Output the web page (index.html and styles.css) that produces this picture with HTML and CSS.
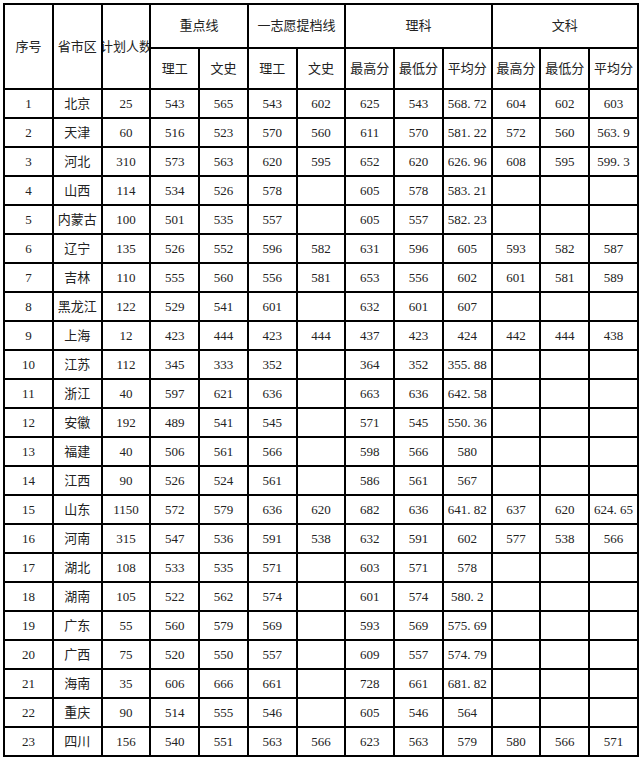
FILE: index.html
```html
<!DOCTYPE html>
<html lang="zh">
<head>
<meta charset="utf-8">
<title>分数线</title>
<link rel="stylesheet" href="styles.css">
</head>
<body>
<table class="grid">
<thead>
<tr class="h1">
<th rowspan="2">序号</th>
<th rowspan="2">省市区</th>
<th rowspan="2"><div class="clip">计划人数</div></th>
<th colspan="2">重点线</th>
<th colspan="2">一志愿提档线</th>
<th colspan="3">理科</th>
<th colspan="3">文科</th>
</tr>
<tr class="h2">
<th>理工</th><th>文史</th><th>理工</th><th>文史</th>
<th>最高分</th><th>最低分</th><th>平均分</th>
<th>最高分</th><th>最低分</th><th>平均分</th>
</tr>
</thead>
<tbody>
<tr><td>1</td><td>北京</td><td>25</td><td>543</td><td>565</td><td>543</td><td>602</td><td>625</td><td>543</td><td>568<span class="pt">.</span>72</td><td>604</td><td>602</td><td>603</td></tr>
<tr><td>2</td><td>天津</td><td>60</td><td>516</td><td>523</td><td>570</td><td>560</td><td>611</td><td>570</td><td>581<span class="pt">.</span>22</td><td>572</td><td>560</td><td>563<span class="pt">.</span>9</td></tr>
<tr><td>3</td><td>河北</td><td>310</td><td>573</td><td>563</td><td>620</td><td>595</td><td>652</td><td>620</td><td>626<span class="pt">.</span>96</td><td>608</td><td>595</td><td>599<span class="pt">.</span>3</td></tr>
<tr><td>4</td><td>山西</td><td>114</td><td>534</td><td>526</td><td>578</td><td></td><td>605</td><td>578</td><td>583<span class="pt">.</span>21</td><td></td><td></td><td></td></tr>
<tr><td>5</td><td>内蒙古</td><td>100</td><td>501</td><td>535</td><td>557</td><td></td><td>605</td><td>557</td><td>582<span class="pt">.</span>23</td><td></td><td></td><td></td></tr>
<tr><td>6</td><td>辽宁</td><td>135</td><td>526</td><td>552</td><td>596</td><td>582</td><td>631</td><td>596</td><td>605</td><td>593</td><td>582</td><td>587</td></tr>
<tr><td>7</td><td>吉林</td><td>110</td><td>555</td><td>560</td><td>556</td><td>581</td><td>653</td><td>556</td><td>602</td><td>601</td><td>581</td><td>589</td></tr>
<tr><td>8</td><td>黑龙江</td><td>122</td><td>529</td><td>541</td><td>601</td><td></td><td>632</td><td>601</td><td>607</td><td></td><td></td><td></td></tr>
<tr><td>9</td><td>上海</td><td>12</td><td>423</td><td>444</td><td>423</td><td>444</td><td>437</td><td>423</td><td>424</td><td>442</td><td>444</td><td>438</td></tr>
<tr><td>10</td><td>江苏</td><td>112</td><td>345</td><td>333</td><td>352</td><td></td><td>364</td><td>352</td><td>355<span class="pt">.</span>88</td><td></td><td></td><td></td></tr>
<tr><td>11</td><td>浙江</td><td>40</td><td>597</td><td>621</td><td>636</td><td></td><td>663</td><td>636</td><td>642<span class="pt">.</span>58</td><td></td><td></td><td></td></tr>
<tr><td>12</td><td>安徽</td><td>192</td><td>489</td><td>541</td><td>545</td><td></td><td>571</td><td>545</td><td>550<span class="pt">.</span>36</td><td></td><td></td><td></td></tr>
<tr><td>13</td><td>福建</td><td>40</td><td>506</td><td>561</td><td>566</td><td></td><td>598</td><td>566</td><td>580</td><td></td><td></td><td></td></tr>
<tr><td>14</td><td>江西</td><td>90</td><td>526</td><td>524</td><td>561</td><td></td><td>586</td><td>561</td><td>567</td><td></td><td></td><td></td></tr>
<tr><td>15</td><td>山东</td><td>1150</td><td>572</td><td>579</td><td>636</td><td>620</td><td>682</td><td>636</td><td>641<span class="pt">.</span>82</td><td>637</td><td>620</td><td>624<span class="pt">.</span>65</td></tr>
<tr><td>16</td><td>河南</td><td>315</td><td>547</td><td>536</td><td>591</td><td>538</td><td>632</td><td>591</td><td>602</td><td>577</td><td>538</td><td>566</td></tr>
<tr><td>17</td><td>湖北</td><td>108</td><td>533</td><td>535</td><td>571</td><td></td><td>603</td><td>571</td><td>578</td><td></td><td></td><td></td></tr>
<tr><td>18</td><td>湖南</td><td>105</td><td>522</td><td>562</td><td>574</td><td></td><td>601</td><td>574</td><td>580<span class="pt">.</span>2</td><td></td><td></td><td></td></tr>
<tr><td>19</td><td>广东</td><td>55</td><td>560</td><td>579</td><td>569</td><td></td><td>593</td><td>569</td><td>575<span class="pt">.</span>69</td><td></td><td></td><td></td></tr>
<tr><td>20</td><td>广西</td><td>75</td><td>520</td><td>550</td><td>557</td><td></td><td>609</td><td>557</td><td>574<span class="pt">.</span>79</td><td></td><td></td><td></td></tr>
<tr><td>21</td><td>海南</td><td>35</td><td>606</td><td>666</td><td>661</td><td></td><td>728</td><td>661</td><td>681<span class="pt">.</span>82</td><td></td><td></td><td></td></tr>
<tr><td>22</td><td>重庆</td><td>90</td><td>514</td><td>555</td><td>546</td><td></td><td>605</td><td>546</td><td>564</td><td></td><td></td><td></td></tr>
<tr><td>23</td><td>四川</td><td>156</td><td>540</td><td>551</td><td>563</td><td>566</td><td>623</td><td>563</td><td>579</td><td>580</td><td>566</td><td>571</td></tr>
</tbody>
</table>
</body>
</html>
```
FILE: styles.css
```css
html, body {
  margin: 0;
  padding: 0;
  background: #fff;
}
body {
  padding: 3px 0 0 3px;
  font-family: "Liberation Serif", "Noto Sans CJK SC", serif;
  font-size: 13px;
  color: #222;
}
.grid {
  table-layout: fixed;
  width: 636px;
  border-collapse: separate;
  border-spacing: 0;
  border-left: 2px solid #000;
  border-top: 2px solid #000;
}
.grid th,
.grid td {
  border-right: 2px solid #000;
  border-bottom: 2px solid #000;
  padding: 0;
  text-align: center;
  vertical-align: middle;
  font-weight: normal;
  white-space: nowrap;
  line-height: 16px;
}
.grid .h1 { height: 44px; }
.grid .h2 { height: 41px; }
.grid tbody tr { height: 29px; }
.clip {
  display: flex;
  justify-content: center;
  overflow: hidden;
  white-space: nowrap;
}
.pt {
  display: inline-block;
  width: 6.5px;
  text-align: left;
}
```
